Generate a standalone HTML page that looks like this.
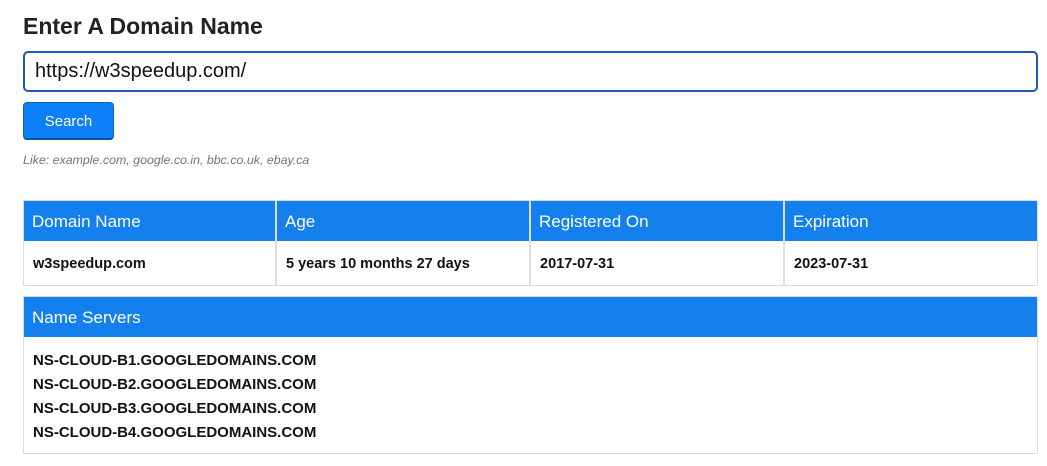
<!DOCTYPE html>
<html><head><style>
*{box-sizing:border-box;margin:0;padding:0}
body{width:1047px;height:466px;background:#fff;font-family:"Liberation Sans",sans-serif;color:#212529;position:relative;overflow:hidden}
h1{position:absolute;left:23px;top:13px;font-size:23px;font-weight:bold;color:#222}
.inp{position:absolute;left:23px;top:51px;width:1015px;height:41px;border:2px solid #1f56b8;border-radius:5px;font-size:20px;padding:7px 10px;color:#111}
.btn{position:absolute;left:23px;top:102px;width:91px;height:38px;background:#0d7ff8;border:1px solid #0b5fc0;border-bottom:2px solid #0a4fa0;border-radius:4px;color:#fff;font-size:15px;text-align:center;line-height:37px}
.hint{position:absolute;left:23px;top:153px;font-size:12.4px;font-style:italic;color:#6c757d}
.card{position:absolute;border:1px solid #ddd;background:#fff}
.hd{background:#1380ee;color:#fff;height:40px;font-size:17px;padding:0 8px;line-height:41px}
.bd{font-size:14.5px;font-weight:bold;color:#111;padding:0 9px;line-height:47px}
.ns{font-size:15px;font-weight:bold;color:#111;padding:12px 9px;line-height:24px}
</style></head><body>
<h1>Enter A Domain Name</h1>
<div class="inp">https://w3speedup.com/</div>
<div class="btn">Search</div>
<div class="hint">Like: example.com, google.co.in, bbc.co.uk, ebay.ca</div>
<div class="card" style="left:23px;top:200px;width:253px;height:86px"><div class="hd">Domain Name</div><div class="bd">w3speedup.com</div></div>
<div class="card" style="left:276px;top:200px;width:254px;height:86px"><div class="hd">Age</div><div class="bd">5 years 10 months 27 days</div></div>
<div class="card" style="left:530px;top:200px;width:254px;height:86px"><div class="hd">Registered On</div><div class="bd">2017-07-31</div></div>
<div class="card" style="left:784px;top:200px;width:254px;height:86px"><div class="hd">Expiration</div><div class="bd">2023-07-31</div></div>
<div class="card" style="left:23px;top:296px;width:1015px;height:158px"><div class="hd">Name Servers</div><div class="ns">NS-CLOUD-B1.GOOGLEDOMAINS.COM<br>NS-CLOUD-B2.GOOGLEDOMAINS.COM<br>NS-CLOUD-B3.GOOGLEDOMAINS.COM<br>NS-CLOUD-B4.GOOGLEDOMAINS.COM</div></div>
</body></html>
